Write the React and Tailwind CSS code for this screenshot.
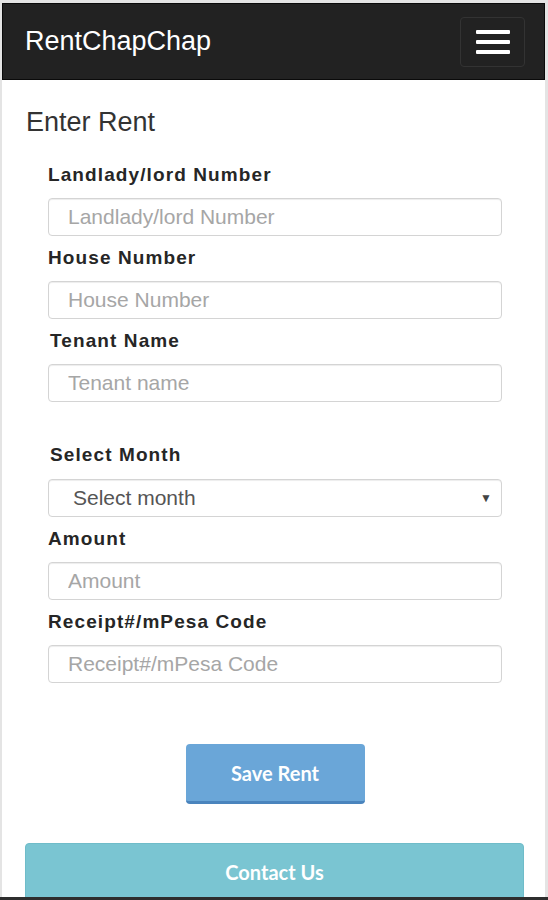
import { useState } from "react";

const fields = [
  { label: "Landlady/lord Number", placeholder: "Landlady/lord Number" },
  { label: "House Number", placeholder: "House Number" },
  { label: "Tenant Name", placeholder: "Tenant name", shift: true },
];

const moreFields = [
  { label: "Amount", placeholder: "Amount" },
  { label: "Receipt#/mPesa Code", placeholder: "Receipt#/mPesa Code" },
];

const labelClass =
  "block text-[19px] leading-[22px] font-bold tracking-[1.1px] text-[#262626] mb-[12px]";
const inputClass =
  "block w-full h-[38px] rounded-[4px] border border-[#d4d4d4] bg-white px-[19px] text-[21px] text-[#555] placeholder:text-[#a6a6a6] shadow-[inset_0_1px_1px_rgba(0,0,0,0.075)] outline-none";

function Field({ label, placeholder, shift }) {
  return (
    <div className="mb-[11px]">
      <label className={`${labelClass} ${shift ? "pl-[2px]" : ""}`}>{label}</label>
      <input type="text" placeholder={placeholder} className={inputClass} />
    </div>
  );
}

function App() {
  const [month, setMonth] = useState("");

  return (
    <div
      className="w-[548px] h-[900px] overflow-hidden bg-[#e4e4e4] pt-[3px] pl-[2px] pr-[3px] border-b-[3px] border-[#2e2e2e] box-border"
      style={{ fontFamily: '"Liberation Sans", Arial, sans-serif' }}
    >
      <nav className="h-[77px] bg-[#222] border border-[#0a0a0a] flex items-center justify-between pl-[22px] pr-[19px]">
        <span className="text-white text-[27px] leading-none">RentChapChap</span>
        <button className="w-[65px] h-[50px] rounded-[4px] border border-[#333] flex flex-col items-center justify-center gap-[6px]">
          <span className="block w-[34px] h-[4px] rounded-[1px] bg-white" />
          <span className="block w-[34px] h-[4px] rounded-[1px] bg-white" />
          <span className="block w-[34px] h-[4px] rounded-[1px] bg-white" />
        </button>
      </nav>

      <main className="bg-white h-full pl-[23px] pr-[21px] pt-[27px]">
        <h2 className="text-[27px] leading-[30px] text-[#333] mb-[27px] pl-[1px]">Enter Rent</h2>

        <form className="pl-[23px] pr-[22px]">
          {fields.map((f) => (
            <Field key={f.label} {...f} />
          ))}

          <div className="mt-[42px] mb-[11px]">
            <label className={`${labelClass} pl-[2px] mb-[13px]`}>Select Month</label>
            <div className="relative">
              <select
                value={month}
                onChange={(e) => setMonth(e.target.value)}
                className={`${inputClass} appearance-none pl-[24px] text-[#555]`}
              >
                <option value="">Select month</option>
                <option>January</option>
                <option>February</option>
                <option>March</option>
              </select>
              <span className="absolute right-[10px] top-[10px] text-[12px] text-[#444] pointer-events-none">
                ▼
              </span>
            </div>
          </div>

          {moreFields.map((f) => (
            <Field key={f.label} {...f} />
          ))}

          <div className="flex justify-center mt-[61px]">
            <button
              type="button"
              className="w-[179px] h-[60px] rounded-[4px] bg-[#6aa6d8] border-b-[3px] border-[#4a84bd] text-white text-[20px] font-bold"
              style={{ fontFamily: "Lato, sans-serif" }}
            >
              Save Rent
            </button>
          </div>
        </form>

        <button
          type="button"
          className="mt-[39px] w-full h-[70px] rounded-t-[4px] bg-[#7ac5d2] border border-[#6fbcc9] text-white text-[20px] font-bold pb-[12px]"
          style={{ fontFamily: "Lato, sans-serif" }}
        >
          Contact Us
        </button>
      </main>
    </div>
  );
}

export default App;
